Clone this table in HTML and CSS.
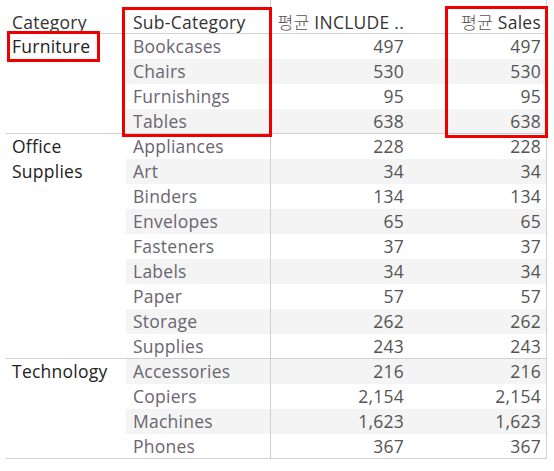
FILE: index.html
```html
<!DOCTYPE html>
<html>
<head>
<meta charset="utf-8">
<link rel="stylesheet" href="styles.css">
</head>
<body>
<div class="sheet">
  <div class="table">
    <div class="head">
      <div class="hcell cat">Category</div>
      <div class="hcell sub">Sub-Category</div>
      <div class="hcell num"><span class="ko">평균</span> INCLUDE ..</div>
      <div class="hcell num last"><span class="ko">평균</span> Sales</div>
    </div>

    <div class="group">
      <div class="catcell">Furniture</div>
      <div class="rows">
        <div class="row"><span class="sub">Bookcases</span><span class="num">497</span><span class="num last">497</span></div>
        <div class="row alt"><span class="sub">Chairs</span><span class="num">530</span><span class="num last">530</span></div>
        <div class="row"><span class="sub">Furnishings</span><span class="num">95</span><span class="num last">95</span></div>
        <div class="row alt"><span class="sub">Tables</span><span class="num">638</span><span class="num last">638</span></div>
      </div>
    </div>

    <div class="group">
      <div class="catcell">Office Supplies</div>
      <div class="rows">
        <div class="row"><span class="sub">Appliances</span><span class="num">228</span><span class="num last">228</span></div>
        <div class="row alt"><span class="sub">Art</span><span class="num">34</span><span class="num last">34</span></div>
        <div class="row"><span class="sub">Binders</span><span class="num">134</span><span class="num last">134</span></div>
        <div class="row alt"><span class="sub">Envelopes</span><span class="num">65</span><span class="num last">65</span></div>
        <div class="row"><span class="sub">Fasteners</span><span class="num">37</span><span class="num last">37</span></div>
        <div class="row alt"><span class="sub">Labels</span><span class="num">34</span><span class="num last">34</span></div>
        <div class="row"><span class="sub">Paper</span><span class="num">57</span><span class="num last">57</span></div>
        <div class="row alt"><span class="sub">Storage</span><span class="num">262</span><span class="num last">262</span></div>
        <div class="row"><span class="sub">Supplies</span><span class="num">243</span><span class="num last">243</span></div>
      </div>
    </div>

    <div class="group">
      <div class="catcell">Technology</div>
      <div class="rows">
        <div class="row alt"><span class="sub">Accessories</span><span class="num">216</span><span class="num last">216</span></div>
        <div class="row"><span class="sub">Copiers</span><span class="num">2,154</span><span class="num last">2,154</span></div>
        <div class="row alt"><span class="sub">Machines</span><span class="num">1,623</span><span class="num last">1,623</span></div>
        <div class="row"><span class="sub">Phones</span><span class="num">367</span><span class="num last">367</span></div>
      </div>
    </div>
  </div>

  <div class="mark mark-furniture"></div>
  <div class="mark mark-sub"></div>
  <div class="mark mark-sales"></div>
</div>
</body>
</html>
```

FILE: styles.css
```css
* { box-sizing: border-box; }

html, body {
  margin: 0;
  padding: 0;
  background: #ffffff;
}

body {
  font-family: "Open Sans", "Noto Sans CJK KR", sans-serif;
  font-size: 17.5px;
  letter-spacing: 0.25px;
  color: #333333;
}

.sheet {
  position: relative;
  width: 554px;
  height: 471px;
  padding-left: 6px;
}

.table {
  width: 541px;
  border-right: 1px solid #d0d0d0;
}

.head {
  display: grid;
  grid-template-columns: 120px 145px 139px 136px;
  height: 34px;
  border-bottom: 1px solid #d0d0d0;
}

.hcell {
  padding-top: 10px;
  line-height: 24px;
  white-space: nowrap;
  color: #333333;
}

.hcell .ko {
  font-family: "Noto Sans CJK KR", sans-serif;
  font-weight: 300;
  color: #555555;
  letter-spacing: 0;
}

.hcell.cat { padding-left: 6px; }
.hcell.sub { padding-left: 7px; border-right: 1px solid #d0d0d0; }
.hcell.num { text-align: right; padding-right: 6px; }
.hcell.last { padding-right: 5px; }

.group {
  display: grid;
  grid-template-columns: 120px 1fr;
  border-bottom: 1px solid #d0d0d0;
}

.catcell {
  padding: 0 6px;
  line-height: 25px;
  color: #222222;
  font-weight: 500;
}

.rows {
  display: flex;
  flex-direction: column;
}

.row {
  display: grid;
  grid-template-columns: 145px 139px 136px;
  height: 25px;
  line-height: 25px;
}

.row:last-child { height: 24px; }

.row.alt { background: #f4f4f4; }

.row .sub {
  padding-left: 7px;
  color: #6a6570;
  border-right: 1px solid #d0d0d0;
  white-space: nowrap;
}

.row .num {
  text-align: right;
  padding-right: 6px;
  color: #555555;
}

.row .num.last { padding-right: 5px; }

.mark {
  position: absolute;
  border: 3px solid #ee0000;
}

.mark-furniture { left: 7px; top: 31px; width: 93px; height: 31px; }
.mark-sub { left: 122px; top: 7px; width: 150px; height: 130px; }
.mark-sales { left: 445px; top: 6px; width: 103px; height: 132px; }
```
